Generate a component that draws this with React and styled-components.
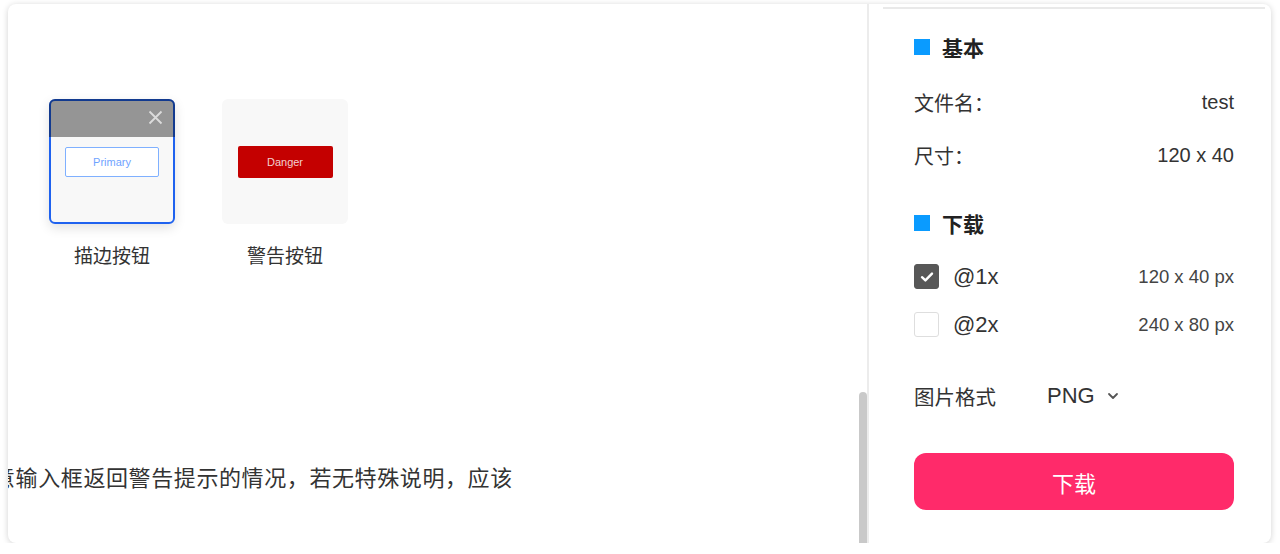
import React from "react";
import styled, { createGlobalStyle } from "styled-components";

const Global = createGlobalStyle`
  html, body {
    margin: 0;
    padding: 0;
    background: #fff;
  }
  body {
    font-family: "Liberation Sans", "Noto Sans CJK SC", sans-serif;
    color: #333;
  }
`;

function App() {
  return (
    <>
      <Global />
      <Card>
        <Left>
          <Gallery>
            <Item>
              <Thumb selected>
                <ThumbHead>
                  <svg width="15" height="15" viewBox="0 0 15 15">
                    <path d="M1.5 1.5 L13.5 13.5 M13.5 1.5 L1.5 13.5" stroke="#dcdcdc" strokeWidth="1.8" fill="none" />
                  </svg>
                </ThumbHead>
                <MiniBtn variant="outline">Primary</MiniBtn>
              </Thumb>
              <Label>描边按钮</Label>
            </Item>
            <Item>
              <Thumb>
                <MiniBtn variant="danger">Danger</MiniBtn>
              </Thumb>
              <Label>警告按钮</Label>
            </Item>
          </Gallery>
          <Para>意输入框返回警告提示的情况，若无特殊说明，应该</Para>
          <ScrollThumb />
        </Left>

        <Right>
          <TopLine />
          <SectionTitle gap={26}>
            <Mark />
            基本
          </SectionTitle>
          <InfoRow gap={29}>
            <span>文件名：</span>
            <span>test</span>
          </InfoRow>
          <InfoRow gap={25}>
            <span>尺寸：</span>
            <span>120 x 40</span>
          </InfoRow>

          <SectionTitle gap={42}>
            <Mark />
            下载
          </SectionTitle>
          <CheckRow gap={29}>
            <Box checked>
              <svg width="14" height="12" viewBox="0 0 14 12">
                <path d="M2 6.2 L5.4 9.4 L12 2.6" stroke="#fff" strokeWidth="2.4" fill="none" strokeLinecap="round" strokeLinejoin="round" />
              </svg>
            </Box>
            <Scale>@1x</Scale>
            <Px>120 x 40 px</Px>
          </CheckRow>
          <CheckRow gap={23}>
            <Box />
            <Scale>@2x</Scale>
            <Px>240 x 80 px</Px>
          </CheckRow>

          <FormatRow>
            <FormatLabel>图片格式</FormatLabel>
            <Select>
              PNG
              <svg width="12" height="8" viewBox="0 0 12 8">
                <path d="M2 2 L6 6 L10 2" stroke="#555" strokeWidth="1.8" fill="none" strokeLinecap="round" strokeLinejoin="round" />
              </svg>
            </Select>
          </FormatRow>

          <Download>下载</Download>
        </Right>
      </Card>
    </>
  );
}

export default App;

const Card = styled.div`
  margin: 4px 9px 0 8px;
  height: 539px;
  display: flex;
  background: #fff;
  border-radius: 8px;
  box-shadow: 0 1px 6px rgba(0, 0, 0, 0.18);
  overflow: hidden;
`;

const Left = styled.div`
  position: relative;
  width: 861px;
  flex-shrink: 0;
  box-sizing: border-box;
  border-right: 2px solid #ececec;
  overflow: hidden;
`;

const Gallery = styled.div`
  display: flex;
  gap: 47px;
  padding: 95px 0 0 41px;
`;

const Item = styled.div`
  display: flex;
  flex-direction: column;
  align-items: center;
  width: 126px;
`;

const Thumb = styled.div`
  position: relative;
  width: 126px;
  height: 125px;
  box-sizing: border-box;
  border-radius: 6px;
  background: #f8f8f8;
  display: flex;
  align-items: center;
  justify-content: center;
  border: 2px solid ${(p) => (p.selected ? "#1f62ef" : "transparent")};
  box-shadow: ${(p) => (p.selected ? "0 4px 12px rgba(0,0,0,0.12)" : "none")};
`;

const ThumbHead = styled.div`
  position: absolute;
  top: -2px;
  left: -2px;
  right: -2px;
  height: 38px;
  border-radius: 6px 6px 0 0;
  background: rgba(0, 0, 0, 0.4);
  display: flex;
  justify-content: flex-end;
  align-items: flex-start;
  padding: 11px 12px 0 0;
  box-sizing: border-box;
`;

const MiniBtn = styled.div`
  width: ${(p) => (p.variant === "danger" ? "95px" : "94px")};
  height: ${(p) => (p.variant === "danger" ? "32px" : "30px")};
  box-sizing: border-box;
  display: flex;
  align-items: center;
  justify-content: center;
  font-size: 11px;
  border-radius: 2px;
  color: ${(p) => (p.variant === "danger" ? "#f3d0d0" : "#6fa3ff")};
  background: ${(p) => (p.variant === "danger" ? "#c40000" : "#fff")};
  border: ${(p) => (p.variant === "danger" ? "none" : "1.5px solid #7fb0ff")};
`;

const Label = styled.div`
  margin-top: 20px;
  font-size: 19px;
  line-height: 26px;
  color: #333;
  white-space: nowrap;
`;

const Para = styled.div`
  margin: 194px 0 0 -15px;
  font-size: 22px;
  letter-spacing: 0.6px;
  line-height: 30px;
  color: #333;
  white-space: nowrap;
`;

const ScrollThumb = styled.div`
  position: absolute;
  right: 0;
  top: 388px;
  bottom: 0;
  width: 8px;
  border-radius: 4px 4px 0 0;
  background: #c9c9c9;
`;

const Right = styled.div`
  flex: 1;
  display: flex;
  flex-direction: column;
  padding: 0 37px 0 45px;
`;

const TopLine = styled.div`
  margin: 3px -31px 0 -31px;
  height: 2px;
  background: #e9e9e9;
`;

const SectionTitle = styled.div`
  margin-top: ${(p) => p.gap}px;
  display: flex;
  align-items: center;
  gap: 12px;
  height: 24px;
  font-size: 21px;
  font-weight: bold;
  color: #222;
`;

const Mark = styled.span`
  width: 16px;
  height: 16px;
  background: #0a9bff;
`;

const InfoRow = styled.div`
  margin-top: ${(p) => p.gap}px;
  display: flex;
  justify-content: space-between;
  align-items: center;
  height: 28px;
  font-size: 20px;
  color: #333;
`;

const CheckRow = styled.div`
  margin-top: ${(p) => p.gap}px;
  display: flex;
  align-items: center;
  height: 25px;
`;

const Box = styled.span`
  width: 25px;
  height: 25px;
  box-sizing: border-box;
  border-radius: 3px;
  display: flex;
  align-items: center;
  justify-content: center;
  background: ${(p) => (p.checked ? "#575757" : "#fff")};
  border: 1.5px solid ${(p) => (p.checked ? "#575757" : "#dedede")};
`;

const Scale = styled.span`
  margin-left: 14px;
  font-size: 22px;
  color: #333;
`;

const Px = styled.span`
  margin-left: auto;
  font-size: 18.5px;
  color: #444;
`;

const FormatRow = styled.div`
  margin-top: 45px;
  display: flex;
  align-items: center;
  height: 28px;
`;

const FormatLabel = styled.span`
  width: 133px;
  font-size: 20.5px;
  color: #333;
`;

const Select = styled.span`
  display: flex;
  align-items: center;
  gap: 12px;
  font-size: 22px;
  color: #333;
`;

const Download = styled.button`
  margin-top: 43px;
  height: 57px;
  border: none;
  border-radius: 12px;
  background: #ff2a6a;
  color: #fff;
  font-family: inherit;
  font-size: 22px;
  cursor: pointer;
`;
